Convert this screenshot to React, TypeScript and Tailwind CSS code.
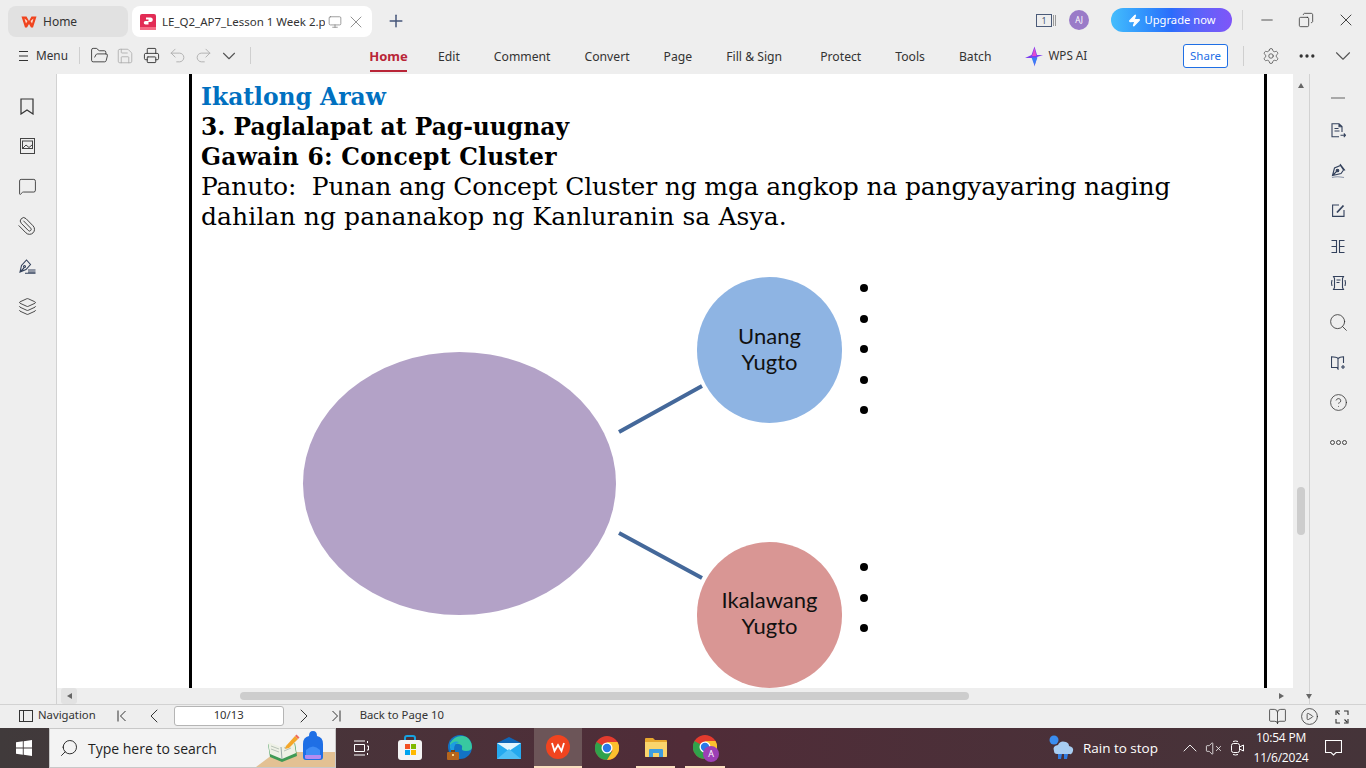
import {
  BookOpen,
  ChevronDown,
  ChevronLeft,
  ChevronRight,
  ChevronUp,
  CircleHelp,
  CirclePlay,
  Copy,
  Ellipsis,
  FolderOpen,
  Layers,
  MessageSquare,
  Minus,
  Monitor,
  Paperclip,
  Plus,
  Printer,
  Redo2,
  Save,
  Search,
  Settings,
  Undo2,
  VolumeX,
  X,
  Zap,
} from "lucide-react";

const tabs = ["Comment", "Convert", "Page", "Fill & Sign", "Protect", "Tools", "Batch"];

const WpsLogo = () => (
  <svg width="16" height="16" viewBox="0 0 16 16">
    <path d="M0.500 2.500H5.500L8 7l2.500-4.500H15.500L12 13.500H10L8 10l-2 3.500H4z" fill="#f0441f" />
    <path d="M3.500 4.500 5 9.500 6.500 7zM12.500 4.500 11 9.500 9.500 7z" fill="#ffd9c9" />
  </svg>
);

const PdfIcon = () => (
  <svg width="16" height="16" viewBox="0 0 16 16">
    <rect width="16" height="16" rx="2" fill="#e22c55" />
    <rect y="13" width="16" height="3" fill="#f56a84" />
    <path d="M6 3.500h5a2.300 2.300 0 0 1 0 4.500H8.500v2.500H5.500a1.500 1.500 0 0 1 0-3.500h3V5.500H6z" fill="#fff" />
  </svg>
);

const WpsAi = () => (
  <svg width="18" height="21" viewBox="0 0 18 21">
    <path d="M9.500 0.500 12 9h6L12 11 9.500 20.500 8 12H0L6.500 9z" fill="#7c3df0" />
    <path d="M9.500 2 11.500 10H7z" fill="#e24ad0" />
    <path d="M6.500 11.500h6l-3 8z" fill="#3d7df5" />
  </svg>
);

const Bookmark = () => (
  <svg width="14" height="17" viewBox="0 0 14 17" fill="none" stroke="#333" strokeWidth="1.200">
    <path d="M1 1h12v15l-6-4-6 4z" />
  </svg>
);

const PictureIcon = () => (
  <svg width="15" height="16" viewBox="0 0 15 16" fill="none" stroke="#444" strokeWidth="1">
    <rect x="0.500" y="0.500" width="14" height="15" />
    <rect x="2.500" y="3" width="10" height="7.500" />
    <path d="M3 10l3-3 3 2.500 3-2.500" />
  </svg>
);

const SignIcon = () => (
  <svg width="17" height="15" viewBox="0 0 17 15" fill="none" stroke="#33415c" strokeWidth="1.100">
    <path d="M1 13 2.500 6.500 7.500 1l4 4.500-4.500 5zM1 13l4-4" />
    <circle cx="5.500" cy="7.500" r="1" />
    <path d="M9 11h7.500M9 13h7.500M6 14.300h10.500" />
  </svg>
);

const MenuIcon = () => (
  <svg width="9" height="12" viewBox="0 0 9 12" stroke="#333" strokeWidth="1.100">
    <path d="M0 1.500h9M0 6h9M0 10.500h9" />
  </svg>
);

const PanelIcon = () => (
  <svg width="14" height="12" viewBox="0 0 14 12" fill="none" stroke="#333">
    <rect x="0.500" y="0.500" width="13" height="11" />
    <path d="M4.500 0.500v11" />
  </svg>
);

const FirstPage = ({ flip }: { flip?: boolean }) => (
  <svg width="10" height="12" viewBox="0 0 10 12" fill="none" stroke="#333" className={flip ? "rotate-180" : ""}>
    <path d="M1 0.500v11M8.500 1 3.500 6l5 5" />
  </svg>
);

const FullScreen = () => (
  <svg width="14" height="14" viewBox="0 0 14 14" fill="none" stroke="#333" strokeWidth="1.100">
    <path d="M1 5V1h4M9 1h4v4M13 9v4H9M5 13H1V9M4.500 4.500 2 2M9.500 9.500 12 12" />
  </svg>
);

const FileSend = () => (
  <svg width="15" height="15" viewBox="0 0 15 15" fill="none" stroke="#33415c" strokeWidth="1.100">
    <path d="M11 9V3.500L8 0.800H1v13h7M8 0.800v3h3M3.500 5.500h4M3.500 8h5M9.500 12.300h5M12.800 10.500l1.700 1.800-1.700 1.800" />
  </svg>
);

const NibIcon = () => (
  <svg width="15" height="16" viewBox="0 0 15 16" fill="none" stroke="#33415c" strokeWidth="1.100">
    <path d="M1.500 12.500 3.500 5 9.500 2.500 12.500 7 10 10.500zM1.500 12.500l4-4M9 1l5 6.500" />
    <circle cx="6.500" cy="7.500" r="1.300" fill="#33415c" />
    <path d="M1 14.500c4-1.200 7-1 12 0" stroke="#8994a8" />
  </svg>
);

const EditIcon = () => (
  <svg width="13" height="13" viewBox="0 0 13 13" fill="none" stroke="#33415c" strokeWidth="1.100">
    <path d="M7 1H0.600v11.400H12V6" />
    <path d="M5 8.500 11.500 1.500" strokeWidth="1.800" />
  </svg>
);

const SplitIcon = () => (
  <svg width="14" height="13" viewBox="0 0 14 13" fill="none" stroke="#33415c" strokeWidth="1.100">
    <path d="M0.500 0.500h5v12h-5M0.500 6.500h5M13.500 0.500h-5v12h5M8.500 6.500h5" />
  </svg>
);

const ScanIcon = () => (
  <svg width="15" height="14" viewBox="0 0 15 14" fill="none" stroke="#33415c" strokeWidth="1.100">
    <path d="M2.500 0.500h10l-1 2v9l1 2h-10l1-2v-9zM5.500 4h4M5.500 6.500h3M1 4 0.500 7 1 10M14 4l.5 3-.5 3" />
  </svg>
);

const BookPlus = () => (
  <svg width="15" height="14" viewBox="0 0 15 14" fill="none" stroke="#33415c" strokeWidth="1.100">
    <path d="M7 2.500C5.500 1 3 0.800 0.500 0.800v10.700H6L7 13V2.500c1.500-1.500 3.500-1.700 5.500-1.700V7" />
    <path d="M12 9v4M10 11h4" />
  </svg>
);

const RailIcon = ({ children, short }: { children: React.ReactNode; short?: boolean }) => (
  <div className={short ? "h-8 flex items-center justify-center" : "h-10 flex items-center justify-center"}>
    {children}
  </div>
);

const WindowsLogo = () => (
  <svg width="16" height="16" viewBox="0 0 16 16" fill="#fff">
    <path d="M0 2.300 6.800 1.300v6.300H0zM7.700 1.200 16 0v7.600H7.700zM0 8.400h6.800v6.300L0 13.700zM7.700 8.400H16V16l-8.300-1.200z" />
  </svg>
);

const SearchArt = () => (
  <svg width="80" height="37" viewBox="0 0 80 37">
    <path d="M1 37 21 22h59v15z" fill="#e3c193" />
    <path d="M13 14 26 19l14-6 2 13-15 6-12-5z" fill="#3f9a55" />
    <path d="M13 12 26 17l13-6 2 12-14 6-12-5z" fill="#eef1e6" />
    <path d="M26 17l1 12" stroke="#98a8a8" fill="none" />
    <path d="M16 16l8 3M16 19l8 3M29 18l7-3M29 21l7-3" stroke="#b8c2b8" fill="none" />
    <path d="M31 16 40 6l3 3-9 9-4 1z" fill="#f4a62a" />
    <path d="M40 6l1.500-1.500 3 3L43 9z" fill="#ef6b5a" />
    <path d="M48 14q0-7 6-8 q0-5 4-5t4 5q6 1 6 8v13q0 3-3 3H51q-3 0-3-3z" fill="#1f6fe5" />
    <path d="M51 20q7-7 14 0v6H51z" fill="#3f8cf5" />
    <path d="M50 25h16v3q0 1-2 1H52q-2 0-2-1z" fill="#b58cf0" />
  </svg>
);

const StoreIcon = () => (
  <svg width="24" height="26" viewBox="0 0 24 26">
    <path d="M7 7V3q0-2 2-2h6q2 0 2 2v4" fill="none" stroke="#17a2e0" strokeWidth="2" />
    <rect y="5" width="24" height="20" rx="3" fill="#f4f4f4" />
    <rect x="7" y="9" width="5" height="5" fill="#f25022" />
    <rect x="13" y="9" width="5" height="5" fill="#7fba00" />
    <rect x="7" y="15" width="5" height="5" fill="#00a4ef" />
    <rect x="13" y="15" width="5" height="5" fill="#ffb900" />
  </svg>
);

const EdgeIcon = () => (
  <svg width="26" height="26" viewBox="0 0 26 26">
    <circle cx="13" cy="12" r="12" fill="#1273c4" />
    <path d="M3 8Q8 0 16 1q8 1 9 11 0 4-6 4-5 0-4-3 1-3-3-4Q7 8 3 14z" fill="#38c8a0" />
    <path d="M3 10q4-5 9-3-5 1-5 8 0 5 5 8-9-1-9-13z" fill="#1d9ee0" />
    <rect x="0" y="17" width="12" height="8" rx="1" fill="#b5651d" />
    <rect x="4" y="15" width="4" height="2" fill="#7a4514" />
    <rect x="5" y="19" width="2" height="2" fill="#f8d68a" />
  </svg>
);

const MailIcon = () => (
  <svg width="24" height="22" viewBox="0 0 24 22">
    <path d="M0 6 12 0l12 6v16H0z" fill="#0f66b8" />
    <path d="M0 6h24v16H0z" fill="#25a9ef" />
    <path d="M0 6h24L12 14z" fill="#e4f5fd" />
    <path d="M0 22 12 12l12 10z" fill="#50bff5" />
  </svg>
);

const ChromeIcon = () => (
  <svg width="24" height="24" viewBox="0 0 24 24">
    <circle cx="12" cy="12" r="12" fill="#e33b2e" />
    <path d="M12 12 1.500 6A12 12 0 0 0 12 24l5-8z" fill="#30a24b" />
    <path d="M12 6h10.500A12 12 0 0 1 12 24l5.500-9z" fill="#fbc02d" />
    <circle cx="12" cy="12" r="5.500" fill="#fff" />
    <circle cx="12" cy="12" r="4.200" fill="#2a79e8" />
  </svg>
);

const FolderIcon = () => (
  <svg width="22" height="19" viewBox="0 0 22 19">
    <path d="M0 1q0-1 1-1h7l2 2h11q1 0 1 1v15q0 1-1 1H1q-1 0-1-1z" fill="#e8a82e" />
    <path d="M0 4h22v14q0 1-1 1H1q-1 0-1-1z" fill="#fad56c" />
    <path d="M4 19v-7q0-1 1-1h12q1 0 1 1v7h-4v-4H8v4z" fill="#3e9ee0" />
  </svg>
);

const App = () => {
  return (
    <div
      className="w-[1366px] h-[768px] overflow-hidden flex flex-col bg-[#eeeeee] text-[#333333] text-[12.200px]"
      style={{ fontFamily: '"Noto Sans", sans-serif' }}
    >
      {/* title bar */}
      <div className="h-[37px] flex items-end shrink-0">
        <div className="ml-2 w-[120px] h-[31px] rounded-lg bg-[#e1e1e1] flex items-center pl-[13px] gap-[6px]">
          <WpsLogo />
          <span className="text-[12px]">Home</span>
        </div>
        <div className="ml-1 w-[240px] h-[31px] rounded-lg bg-white flex items-center pl-2 pr-[6px]">
          <PdfIcon />
          <span className="ml-[6px] w-[163px] overflow-hidden whitespace-nowrap text-[11.500px]">
            LE_Q2_AP7_Lesson 1 Week 2.p
          </span>
          <Monitor size={14} strokeWidth={1.200} className="ml-[3px] text-[#777]" />
          <X size={20} strokeWidth={1.100} className="ml-1 text-[#888]" />
        </div>
        <Plus size={20} strokeWidth={1.800} className="ml-[14px] mb-[6px] text-[#46567a]" />
        <div className="ml-auto h-full flex items-center pt-[3px]">
          <div className="w-5 h-[14px] flex items-center mr-[13px]">
            <span className="w-[16px] h-[13px] border border-[#4a5a78] text-[9px] leading-[11px] text-center text-[#4a5a78]">1</span>
            <span className="ml-[1px] w-[3px] h-[11px] border-x border-[#999]" />
          </div>
          <div className="w-5 h-5 rounded-full bg-[#9a7bc8] text-white text-[8px] flex items-center justify-center">AJ</div>
          <div className="ml-[22px] w-[121px] h-6 rounded-full bg-gradient-to-r from-[#45bdfc] via-[#2b6cfb] to-[#7f55f8] text-white text-[11.200px] flex items-center justify-center gap-1">
            <Zap size={13} fill="#fff" />
            <span>Upgrade now</span>
          </div>
          <div className="ml-[10px] w-px h-5 bg-[#d4d4d4]" />
          <Minus size={18} strokeWidth={1.100} className="ml-[15px]" />
          <Copy size={16} strokeWidth={1.200} className="ml-[22px] -scale-x-100" />
          <X size={20} strokeWidth={1.100} className="ml-[22px] mr-[10px]" />
        </div>
      </div>

      {/* toolbar */}
      <div className="h-[37px] flex items-center shrink-0 relative">
        <div className="ml-[19px] flex items-center">
          <MenuIcon />
          <span className="ml-2 w-[31px] text-[11.800px]">Menu</span>
          <div className="ml-3 w-px h-[17px] bg-[#cfcfcf]" />
          <FolderOpen size={19} strokeWidth={1.100} className="ml-[10px]" />
          <Save size={18} strokeWidth={1.100} className="ml-[7px] text-[#aaaaaa]" />
          <Printer size={17} strokeWidth={1.300} className="ml-[9px]" />
          <Undo2 size={19} strokeWidth={1.100} className="ml-2 text-[#aaaaaa]" />
          <Redo2 size={19} strokeWidth={1.100} className="ml-[7px] text-[#aaaaaa]" />
          <ChevronDown size={22} strokeWidth={1.200} className="ml-[5px] text-[#555]" />
          <div className="ml-[10px] w-px h-[17px] bg-[#cfcfcf]" />
        </div>
        <div className="ml-[119px] h-full flex items-center relative top-[1px]">
          <div className="h-full w-[37px] flex items-center justify-center relative font-bold text-[#b92537] text-[13px]">
            Home
            <span className="absolute left-0 right-0 bottom-[3px] h-[2px] bg-[#b92537]" />
          </div>
          <div className="flex items-center pt-[1px]">
            <span className="ml-[31px] mr-[34px]">Edit</span>
            <div className="flex gap-[34px] items-center">
              {tabs.map((tab) => (
                <span key={tab} className={tab === "Fill & Sign" ? "w-[60px]" : ""}>
                  {tab}
                </span>
              ))}
            </div>
          </div>
          <div className="ml-[34px] flex items-center gap-[5px]">
            <WpsAi />
            <span className="text-[11.700px] -mt-[2px]">WPS AI</span>
          </div>
        </div>
        <div className="ml-auto flex items-center">
          <div className="w-[45px] h-6 rounded-[3px] bg-white border border-[#1f6fe5] text-[#1f6fe5] text-[11.500px] flex items-center justify-center">
            Share
          </div>
          <div className="ml-[15px] w-px h-5 bg-[#cfcfcf]" />
          <Settings size={18} strokeWidth={1.100} className="ml-[18px] text-[#555]" />
          <Ellipsis size={20} className="ml-[17px]" />
          <ChevronDown size={26} strokeWidth={1} className="ml-[13px] mr-[10px] text-[#555]" />
        </div>
      </div>

      {/* main area */}
      <div className="flex-1 min-h-0 flex">
        <div className="w-[57px] shrink-0 border-r border-[#d2d2d2] pt-[12px] flex flex-col items-center pr-[2px]">
          <RailIcon><Bookmark /></RailIcon>
          <RailIcon><PictureIcon /></RailIcon>
          <RailIcon><MessageSquare size={19} strokeWidth={1.100} /></RailIcon>
          <RailIcon><Paperclip size={20} strokeWidth={1.100} className="-scale-x-100" /></RailIcon>
          <RailIcon><SignIcon /></RailIcon>
          <RailIcon><Layers size={19} strokeWidth={1.100} /></RailIcon>
        </div>

        <div className="flex-1 min-w-0 flex flex-col">
          <div className="flex-1 min-h-0 flex">
            <div className="flex-1 min-w-0 bg-white pl-[132px] pr-[26px] overflow-hidden">
              <div
                className="h-full border-x-[3px] border-black pl-[9px] pt-[8px] relative text-black text-[25px] leading-[30px] whitespace-nowrap"
                style={{ fontFamily: '"DejaVu Serif", serif' }}
              >
                <p className="font-bold text-[#0070c0] text-[23.400px]">Ikatlong Araw</p>
                <p className="font-bold text-[23.400px]">3. Paglalapat at Pag-uugnay</p>
                <p className="font-bold text-[23.400px] tracking-[0.280px]">Gawain 6: Concept Cluster</p>
                <p className="tracking-[-0.150px]">Panuto:&nbsp; Punan ang Concept Cluster ng mga angkop na pangyayaring naging</p>
                <p className="tracking-[0.100px]">dahilan ng pananakop ng Kanluranin sa Asya.</p>

                {/* concept cluster diagram */}
                <div className="absolute left-[111px] top-[278px] w-[313px] h-[263px] rounded-[50%] bg-[#b3a2c7]" />
                <svg className="absolute left-[426px] top-[310px]" width="86" height="196" viewBox="0 0 86 196">
                  <path d="M1 48 84 2M1 149l83 45" stroke="#44689a" strokeWidth="4" fill="none" />
                </svg>
                <div
                  className="absolute left-[505px] top-[203px] w-[145px] h-[146px] rounded-full bg-[#8eb4e3] text-[22px] leading-[26px] text-[#111] flex items-center justify-center text-center pb-[2px]"
                  style={{ fontFamily: "Lato, sans-serif" }}
                >
                  Unang
                  <br />
                  Yugto
                </div>
                <div
                  className="absolute left-[505px] top-[468px] w-[145px] h-[146px] rounded-full bg-[#d99694] text-[22px] leading-[26px] text-[#111] flex items-center justify-center text-center pb-[4px]"
                  style={{ fontFamily: "Lato, sans-serif" }}
                >
                  Ikalawang
                  <br />
                  Yugto
                </div>
                <div className="absolute left-[668px] top-[210px] flex flex-col gap-[22.500px]">
                  {[0, 1, 2, 3, 4].map((i) => (
                    <span key={i} className="w-2 h-2 rounded-full bg-black" />
                  ))}
                </div>
                <div className="absolute left-[668px] top-[489px] flex flex-col gap-[22.500px]">
                  {[0, 1, 2].map((i) => (
                    <span key={i} className="w-2 h-2 rounded-full bg-black" />
                  ))}
                </div>
              </div>
            </div>
            <div className="w-4 shrink-0 relative flex justify-center pt-[9px]">
              <span className="w-0 h-0 border-x-[3px] border-x-transparent border-b-[5px] border-b-[#666]" />
              <span className="absolute left-[4px] top-[413px] w-2 h-[48px] rounded-full bg-[#cdcdcd]" />
            </div>
          </div>
          <div className="h-4 shrink-0 flex items-center">
            <div className="w-4 h-4 ml-[4px] rounded-[3px] bg-[#e2e2e2] flex items-center justify-center">
              <span className="w-0 h-0 border-y-[3px] border-y-transparent border-r-[5px] border-r-[#666]" />
            </div>
            <span className="ml-[163px] w-[729px] h-2 rounded-full bg-[#cdcdcd]" />
            <span className="ml-auto mr-[10px] w-0 h-0 border-y-[3px] border-y-transparent border-l-[5px] border-l-[#666]" />
            <span className="mr-[3px] w-0 h-0 border-x-[3px] border-x-transparent border-t-[5px] border-t-[#666] translate-x-[12px]" />
            <span className="w-[6px]" />
          </div>
        </div>

        <div className="w-[57px] shrink-0 border-l border-[#d2d2d2] flex flex-col items-center">
          <div className="mt-[23px] mb-[12px] w-[14px] h-[1.500px] bg-[#a8a8a8]" />
          <RailIcon><FileSend /></RailIcon>
          <RailIcon><NibIcon /></RailIcon>
          <RailIcon><EditIcon /></RailIcon>
          <RailIcon short><SplitIcon /></RailIcon>
          <RailIcon><ScanIcon /></RailIcon>
          <RailIcon><Search size={21} strokeWidth={0.950} className="text-[#333]" /></RailIcon>
          <RailIcon><BookPlus /></RailIcon>
          <RailIcon><CircleHelp size={19} strokeWidth={1} /></RailIcon>
          <RailIcon>
            <div className="flex gap-[1px]">
              <span className="w-[5px] h-[5px] rounded-full border border-[#444]" />
              <span className="w-[5px] h-[5px] rounded-full border border-[#444]" />
              <span className="w-[5px] h-[5px] rounded-full border border-[#444]" />
            </div>
          </RailIcon>
        </div>
      </div>

      {/* status bar */}
      <div className="h-[24px] shrink-0 border-t border-[#d2d2d2] flex items-center text-[11.300px]">
        <div className="ml-[19px] flex items-center pb-[2px]">
          <PanelIcon />
          <span className="ml-[5px]">Navigation</span>
          <span className="ml-[21px]"><FirstPage /></span>
          <ChevronLeft size={24} strokeWidth={1} className="ml-[15px]" />
          <div className="ml-2 w-[110px] h-[20px] rounded-[3px] bg-white border border-[#b5b5b5] flex items-center justify-center">
            10/13
          </div>
          <ChevronRight size={24} strokeWidth={1} className="ml-2" />
          <span className="ml-[15px]"><FirstPage flip /></span>
          <span className="ml-[19px]">Back to Page 10</span>
        </div>
        <div className="ml-auto flex items-center">
          <BookOpen size={19} strokeWidth={1} />
          <CirclePlay size={19} strokeWidth={1} className="ml-[13px]" />
          <span className="ml-4"><FullScreen /></span>
          <span className="w-[17px]" />
        </div>
      </div>

      {/* windows taskbar */}
      <div
        className="h-10 shrink-0 flex items-center text-white bg-gradient-to-r from-[#403a3b] via-[#502c38] to-[#453439]"
        style={{ fontFamily: '"Open Sans", sans-serif' }}
      >
        <div className="w-[32px] ml-[8px] h-full flex items-center justify-center"><WindowsLogo /></div>
        <div className="ml-[9px] w-[287px] h-full bg-[#f3f3f3] border border-[#c8c8c8] flex items-center text-[#1f1f1f] relative">
          <Search size={20} strokeWidth={1.100} className="ml-[9px] -scale-x-100" />
          <span className="ml-[9px] text-[14px]">Type here to search</span>
          <span className="absolute right-0 bottom-0 flex"><SearchArt /></span>
        </div>
        <div className="w-[49px] flex items-center justify-center">
          <svg width="16" height="16" viewBox="0 0 16 16" fill="none" stroke="#fff">
            <path d="M1 1h11M1 15h11M1.500 4.500h10v7h-10zM14.500 1v2M14 6h1.500v4H14M14.500 13v2" />
          </svg>
        </div>
        <div className="w-[50px] flex justify-center"><StoreIcon /></div>
        <div className="w-[49px] flex justify-center"><EdgeIcon /></div>
        <div className="w-[50px] flex justify-center"><MailIcon /></div>
        <div className="w-[48px] h-full bg-[#6c5558] border-b-2 border-[#f9dfbf] flex items-center justify-center">
          <span className="w-6 h-6 rounded-full bg-[#f0441f] flex items-center justify-center">
            <svg width="14" height="11" viewBox="0 0 14 11" fill="none" stroke="#fff" strokeWidth="1.800">
              <path d="M1 1l2.500 8L7 3l3.500 6L13 1" />
            </svg>
          </span>
        </div>
        <div className="w-[50px] flex justify-center"><ChromeIcon /></div>
        <div className="ml-1 w-[39px] h-full border-b-2 border-[#f9dfbf] flex items-center justify-center"><FolderIcon /></div>
        <div className="ml-[10px] w-[40px] h-full border-b-2 border-[#f9dfbf] flex items-center justify-center relative">
          <ChromeIcon />
          <span className="absolute left-[18px] top-[18px] w-4 h-4 rounded-full bg-[#9c3fb5] text-[9px] flex items-center justify-center">A</span>
        </div>

        <div className="ml-auto flex items-center h-full">
          <svg width="26" height="26" viewBox="0 0 26 26">
            <circle cx="5" cy="5" r="4.500" fill="#3a8df0" />
            <path d="M5 16q-2-5 4-6 2-5 8-3 3 1 3 4 5 1 4 5t-3 3H8q-3 0-3-3z" fill="#a8cdf2" />
            <path d="M9 19h4l-1 5H9zM15 19h4l-1 5h-3z" fill="#2f7be0" />
          </svg>
          <span className="ml-2 text-[13.500px]">Rain to stop</span>
          <ChevronUp size={24} strokeWidth={0.900} className="ml-5" />
          <VolumeX size={17} strokeWidth={1.100} className="ml-[3px]" />
          <svg className="ml-[9px]" width="13" height="16" viewBox="0 0 13 16" fill="none" stroke="#fff">
            <rect x="0.500" y="3.500" width="8" height="9" rx="2" />
            <path d="M8.500 7 12.500 5v6l-4-2M2 1.500q2.500-1 5 0M2 14.500q2.500 1 5 0" />
          </svg>
          <div className="ml-[7px] w-[60px] flex flex-col items-center text-[12px] leading-[20px] tracking-[-0.200px]">
            <span>10:54 PM</span>
            <span>11/6/2024</span>
          </div>
          <svg className="ml-[14px] mr-[24px]" width="17" height="16" viewBox="0 0 17 16" fill="none" stroke="#fff" strokeWidth="1.100">
            <path d="M0.500 0.500h16v12H11L8.500 15 6 12.500H0.500z" />
          </svg>
        </div>
      </div>
    </div>
  );
};

export default App;
